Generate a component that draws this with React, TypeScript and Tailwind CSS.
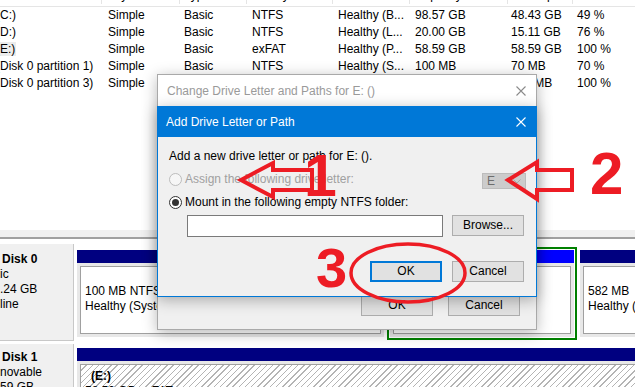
import React from "react";

const ROWS = [
  { name: "(C:)", layout: "Simple", type: "Basic", fs: "NTFS", status: "Healthy (B...", cap: "98.57 GB", free: "48.43 GB", pct: "49 %" },
  { name: "(D:)", layout: "Simple", type: "Basic", fs: "NTFS", status: "Healthy (L...", cap: "20.00 GB", free: "15.11 GB", pct: "76 %" },
  { name: "(E:)", layout: "Simple", type: "Basic", fs: "exFAT", status: "Healthy (P...", cap: "58.59 GB", free: "58.59 GB", pct: "100 %", sel: true },
  { name: "(Disk 0 partition 1)", layout: "Simple", type: "Basic", fs: "NTFS", status: "Healthy (S...", cap: "100 MB", free: "70 MB", pct: "70 %" },
  { name: "(Disk 0 partition 3)", layout: "Simple", type: "Basic", fs: "NTFS", status: "Healthy (R...", cap: "450 MB", free: "450 MB", pct: "100 %" },
];

const HEADERS = ["Volume", "Layout", "Type", "File System", "Status", "Capacity", "Free Space", "% Free"];

function Cells({ vals, header }: { vals: string[]; header?: boolean }) {
  // column widths follow the list view's column dividers
  return (
    <>
      <div className={`w-[102px] shrink-0 overflow-hidden whitespace-nowrap ${header ? "border-r border-[#e5e5e5]" : ""}`}>
        <span className={header ? "ml-[-17px]" : "ml-[-4px]"}>{vals[0]}</span>
      </div>
      <div className={`w-[78px] shrink-0 pl-[6px] whitespace-nowrap overflow-hidden ${header ? "border-r border-[#e5e5e5]" : ""}`}>{vals[1]}</div>
      <div className={`w-[67px] shrink-0 pl-[4px] whitespace-nowrap overflow-hidden ${header ? "border-r border-[#e5e5e5]" : ""}`}>{vals[2]}</div>
      <div className={`w-[86px] shrink-0 pl-[5px] whitespace-nowrap overflow-hidden ${header ? "border-r border-[#e5e5e5]" : ""}`}>{vals[3]}</div>
      <div className={`w-[77px] shrink-0 pl-[5px] whitespace-nowrap overflow-hidden ${header ? "border-r border-[#e5e5e5]" : ""}`}>{vals[4]}</div>
      <div className={`w-[98px] shrink-0 pl-[5px] whitespace-nowrap overflow-hidden ${header ? "border-r border-[#e5e5e5]" : ""}`}>{vals[5]}</div>
      <div className={`w-[65px] shrink-0 pl-[3px] whitespace-nowrap overflow-hidden ${header ? "border-r border-[#e5e5e5]" : ""}`}>{vals[6]}</div>
      <div className="flex-1 pl-[4px] whitespace-nowrap overflow-hidden">{vals[7]}</div>
    </>
  );
}

function Partition({ width, selected, lines, hatched, barColor = "bg-[#000080]" }: { width: string; selected?: boolean; lines: React.ReactNode[]; hatched?: boolean; barColor?: string }) {
  return (
    <div className={`${width} shrink-0 h-full flex flex-col border-2 p-[1px] ${selected ? "border-[#008000]" : "border-transparent"}`}>
      <div className={`h-[13px] shrink-0 ${barColor}`} />
      <div className="flex-1 bg-[#e8e8e8] p-[3px] flex flex-col min-h-0">
        <div
          className={`flex-1 border border-[#a0a0a0] pl-[4px] leading-[15px] overflow-hidden whitespace-nowrap ${
            hatched
              ? "pt-[4px] bg-[repeating-linear-gradient(135deg,#ffffff_0px,#ffffff_3.4px,#b4b4b4_3.4px,#b4b4b4_4.4px)]"
              : "pt-[2px] bg-white"
          }`}
        >
          {lines.map((l, i) => (
            <div key={i} className="h-[15px]">{l}</div>
          ))}
        </div>
      </div>
    </div>
  );
}

function Btn({ children, focus, w = "w-[72px]", h = "h-[21px]" }: { children: React.ReactNode; focus?: boolean; w?: string; h?: string }) {
  return (
    <div
      className={`${w} ${h} shrink-0 flex items-center justify-center bg-[#e1e1e1] text-black ${
        focus ? "border-2 border-[#0078d7]" : "border border-[#adadad]"
      }`}
    >
      {children}
    </div>
  );
}

function CloseX({ color }: { color: string }) {
  return (
    <svg width="10" height="10" viewBox="0 0 10 10" className="shrink-0">
      <path d="M0.5 0.5 L9.5 9.5 M9.5 0.5 L0.5 9.5" stroke={color} strokeWidth="1.1" fill="none" />
    </svg>
  );
}

export default function App() {
  return (
    <div className="relative w-[635px] h-[387px] overflow-hidden bg-white text-[12px] text-black font-['Liberation_Sans',Arial,sans-serif]">
      <div className="flex flex-col h-full">
        {/* volume list */}
        <div className="h-[230px] shrink-0 overflow-hidden">
          <div className="flex h-[24px] -mt-[17px] items-center border-b border-[#e5e5e5] bg-white">
            <Cells vals={HEADERS} header />
          </div>
          {ROWS.map((r) => (
            <div key={r.name} className="flex h-[17px] items-center leading-[17px]">
              <div className={`w-[102px] shrink-0 overflow-hidden whitespace-nowrap`}>
                <span className={`ml-[-4px] ${r.sel ? "bg-[#ececec] pr-[1px]" : ""}`}>{r.name}</span>
              </div>
              <div className="w-[78px] shrink-0 pl-[6px]">{r.layout}</div>
              <div className="w-[67px] shrink-0 pl-[4px]">{r.type}</div>
              <div className="w-[86px] shrink-0 pl-[5px]">{r.fs}</div>
              <div className="w-[77px] shrink-0 pl-[5px] whitespace-nowrap">{r.status}</div>
              <div className="w-[98px] shrink-0 pl-[5px]">{r.cap}</div>
              <div className="w-[65px] shrink-0 pl-[3px]">{r.free}</div>
              <div className="flex-1 pl-[4px]">{r.pct}</div>
            </div>
          ))}
        </div>
        <div className="h-[7px] shrink-0 bg-[#f0f0f0]" />
        <div className="h-[2px] shrink-0 bg-[#a0a0a0]" />

        {/* disk map */}
        <div className="flex-1 flex flex-col bg-white min-h-0">
          <div className="flex h-[97px] mt-[5px] shrink-0">
            <div className="w-[74px] shrink-0 bg-[#f0f0f0] border-r border-b border-[#c8c8c8] pt-[8px] leading-[15px] whitespace-nowrap">
              <div className="font-bold ml-[2px]">Disk 0</div>
              <div>ic</div>
              <div>.24 GB</div>
              <div>line</div>
            </div>
            <div className="flex-1 flex pt-[3px] pb-[1px] min-w-0">
              <Partition width="w-[313px]" lines={["", "100 MB NTFS", "Healthy (System, Active, Primary Partition)"]} />
              <Partition width="w-[190px]" selected barColor="bg-[#0000ff]" lines={["(E:)", "58.59 GB exFAT", "Healthy (Primary"]} />
              <Partition width="w-[80px]" lines={["", "582 MB", "Healthy (Recovery Partition)"]} />
            </div>
          </div>
          <div className="flex flex-1 mt-[3px] min-h-0">
            <div className="w-[74px] shrink-0 bg-[#f0f0f0] border-r border-[#c8c8c8] pt-[6px] leading-[15px] whitespace-nowrap">
              <div className="font-bold ml-[2px]">Disk 1</div>
              <div>novable</div>
              <div>59 GB</div>
            </div>
            <div className="flex-1 flex pt-[1px] h-[60px] min-w-0">
              <Partition width="w-[570px]" hatched lines={[<span className="font-bold ml-[6px]">(E:)</span>, "58.59 GB exFAT"]} />
            </div>
          </div>
        </div>
      </div>

      {/* Change Drive Letter and Paths window */}
      <div className="absolute left-[157px] top-[74px] w-[380px] h-[256px] flex flex-col border border-[#a9a9a9] bg-[#f0f0f0] shadow-[0_3px_14px_rgba(0,0,0,0.28)]">
        <div className="h-[32px] shrink-0 bg-white flex items-center justify-between pl-[9px] pr-[10px] text-[#9a9a9a]">
          <span>Change Drive Letter and Paths for E: ()</span>
          <CloseX color="#8a8a8a" />
        </div>
        <div className="flex-1 flex items-end justify-end gap-[15px] pr-[16px] pb-[13px]">
          <Btn h="h-[23px]">OK</Btn>
          <Btn h="h-[23px]">Cancel</Btn>
        </div>
      </div>

      {/* Add Drive Letter or Path window */}
      <div className="absolute left-[157px] top-[106px] w-[380px] h-[191px] flex flex-col border border-[#0078d7] bg-[#f0f0f0] shadow-[0_3px_14px_rgba(0,0,0,0.3)]">
        <div className="h-[30px] shrink-0 bg-[#0078d7] flex items-center justify-between pl-[8px] pr-[10px] text-white">
          <span>Add Drive Letter or Path</span>
          <CloseX color="#ffffff" />
        </div>
        <div className="flex flex-col pl-[11px] pt-[12px] leading-[15px]">
          <div>Add a new drive letter or path for E: ().</div>
          <div className="flex items-start justify-between h-[20px] mt-[7px]">
            <div className="flex items-center h-[16px] gap-[3px] text-[#a0a0a0]">
              <div className="w-[13px] h-[13px] rounded-full border border-[#bcbcbc] bg-[#f6f6f6]" />
              <span>Assign the following drive letter:</span>
            </div>
            <div className="mt-[2px] mr-[10px] w-[44px] h-[16px] bg-[#cccccc] border border-[#bcbcbc] flex items-center justify-between pl-[4px] pr-[4px] text-[#6d6d6d]">
              <span>E</span>
              <svg width="8" height="5" viewBox="0 0 8 5">
                <path d="M0.5 0.5 L4 4 L7.5 0.5" stroke="#a8a8a8" fill="none" />
              </svg>
            </div>
          </div>
          <div className="flex items-center h-[16px] gap-[3px] mt-[3px]">
            <div className="w-[13px] h-[13px] rounded-full border border-[#333333] bg-white flex items-center justify-center">
              <div className="w-[7px] h-[7px] rounded-full bg-[#333333]" />
            </div>
            <span>Mount in the following empty NTFS folder:</span>
          </div>
          <div className="flex items-start mt-[5px] pl-[18px]">
            <div className="w-[256px] h-[22px] bg-white border border-[#7a7a7a]" />
            <div className="ml-[9px]">
              <Btn>Browse...</Btn>
            </div>
          </div>
          <div className="flex justify-end gap-[10px] mt-[24px] pr-[12px]">
            <Btn focus>OK</Btn>
            <Btn>Cancel</Btn>
          </div>
        </div>
      </div>

      {/* red annotations */}
      <svg className="absolute inset-0 pointer-events-none" width="635" height="387" viewBox="0 0 635 387">
        <polygon points="241,180 273,163 273,170 312,170 312,190 273,190 273,197" fill="none" stroke="#ed1c24" strokeWidth="4" strokeLinejoin="miter" />
        <polygon points="508,180 537,162 537,170 572,170 572,190 537,190 537,199" fill="none" stroke="#ed1c24" strokeWidth="4" strokeLinejoin="miter" />
        <ellipse cx="408" cy="273" rx="57" ry="29" fill="none" stroke="#ed1c24" strokeWidth="3.5" />
      </svg>
      <div className="absolute left-[304px] top-[147px] text-[59px] leading-none font-bold text-[#ed1c24]">1</div>
      <div className="absolute left-[590px] top-[144px] text-[60px] leading-none font-bold text-[#ed1c24]">2</div>
      <div className="absolute left-[316px] top-[240px] text-[56px] leading-none font-bold text-[#ed1c24]">3</div>
    </div>
  );
}
